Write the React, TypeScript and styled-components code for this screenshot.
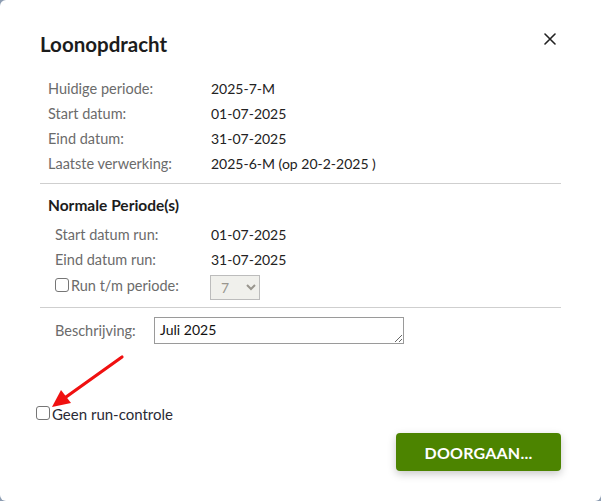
import React from 'react';
import styled, {createGlobalStyle} from 'styled-components';

const GlobalStyle = createGlobalStyle`
  html, body {
    margin: 0;
    padding: 0;
    background: #8d9db2;
  }
  body {
    font-family: "Source Sans Pro", Lato, "Liberation Sans", sans-serif;
  }
`;

interface InfoRow {
    label: string;
    value: string;
}

const huidig: InfoRow[] = [
    {label: 'Huidige periode:', value: '2025-7-M'},
    {label: 'Start datum:', value: '01-07-2025'},
    {label: 'Eind datum:', value: '31-07-2025'},
    {label: 'Laatste verwerking:', value: '2025-6-M (op 20-2-2025 )'},
];

const normaal: InfoRow[] = [
    {label: 'Start datum run:', value: '01-07-2025'},
    {label: 'Eind datum run:', value: '31-07-2025'},
];

const App = () => {
    return <>
        <GlobalStyle/>
        <Dialog>
            <Header>
                <Title>Loonopdracht</Title>
                <CloseButton aria-label="Sluiten">
                    <svg width="12" height="12" viewBox="0 0 12 12">
                        <path d="M1 1 L11 11 M11 1 L1 11" stroke="#222" strokeWidth="1.6" strokeLinecap="round"/>
                    </svg>
                </CloseButton>
            </Header>

            <InfoTable indent={8}>
                {huidig.map(r => <Row key={r.label}>
                    <Label width={163}>{r.label}</Label>
                    <Value>{r.value}</Value>
                </Row>)}
            </InfoTable>

            <Divider/>

            <Section>
                <SectionTitle>Normale Periode(s)</SectionTitle>
                <InfoTable indent={7}>
                    {normaal.map(r => <Row key={r.label}>
                        <Label width={156}>{r.label}</Label>
                        <Value>{r.value}</Value>
                    </Row>)}
                    <Row>
                        <Label width={155}>
                            <CheckLabel>
                                <Check type="checkbox"/>
                                Run t/m periode:
                            </CheckLabel>
                        </Label>
                        <Select disabled defaultValue="7">
                            <option value="7">7</option>
                        </Select>
                    </Row>
                </InfoTable>
            </Section>

            <Divider/>

            <DescRow>
                <Label width={99}>Beschrijving:</Label>
                <TextArea defaultValue="Juli 2025" rows={1}/>
            </DescRow>

            <Annotation>
                <Arrow width="90" height="60" viewBox="0 0 90 60">
                    <line x1="76" y1="3" x2="20" y2="43" stroke="#f01010" strokeWidth="3.2" strokeLinecap="round"/>
                    <polygon points="6,53 15,36 25,49" fill="#f01010"/>
                </Arrow>
                <CheckLabel dark>
                    <Check type="checkbox"/>
                    Geen run-controle
                </CheckLabel>
            </Annotation>

            <Footer>
                <PrimaryButton>DOORGAAN...</PrimaryButton>
            </Footer>
        </Dialog>
    </>;
};

const Dialog = styled.div`
  box-sizing: border-box;
  width: 601px;
  height: 501px;
  background: #fff;
  border-radius: 6px 0 6px 6px;
  padding: 28px 40px 0 40px;
  display: flex;
  flex-direction: column;
  color: #222;
  font-size: 14px;
  overflow: hidden;
`;

const Header = styled.div`
  display: flex;
  justify-content: space-between;
  align-items: flex-start;
  margin-bottom: 20px;
`;

const Title = styled.h2`
  margin: 4px 0 0 0;
  font-size: 20.5px;
  font-weight: 700;
  line-height: 24px;
  color: #1c1c1c;
`;

const CloseButton = styled.button`
  border: none;
  background: none;
  padding: 0;
  margin: 4px 4px 0 0;
  width: 14px;
  height: 14px;
  display: flex;
  align-items: center;
  justify-content: center;
  cursor: pointer;
`;

const InfoTable = styled.div<{indent: number}>`
  display: flex;
  flex-direction: column;
  padding-left: ${p => p.indent}px;
`;

const Row = styled.div`
  display: flex;
  align-items: center;
  min-height: 25px;
`;

const Label = styled.div<{width: number}>`
  width: ${p => p.width}px;
  flex-shrink: 0;
  color: #6b6b6b;
  line-height: 20px;
  font-size: 14.5px;
`;

const Value = styled.div`
  color: #222;
  line-height: 20px;
`;

const Divider = styled.hr`
  border: none;
  border-top: 1px solid #cfcfcf;
  margin: 7px 0 0 0;
  width: 100%;
`;

const Section = styled.div`
  display: flex;
  flex-direction: column;
  padding: 10px 0 0 8px;
`;

const SectionTitle = styled.div`
  font-weight: 700;
  font-size: 15.5px;
  color: #1c1c1c;
  line-height: 22px;
  margin-bottom: 6px;
`;

const CheckLabel = styled.label<{dark?: boolean}>`
  display: flex;
  align-items: flex-end;
  color: ${p => p.dark ? '#2a2a35' : '#6b6b6b'};
  line-height: 20px;
  font-size: ${p => p.dark ? 15 : 14.5}px;
  cursor: pointer;
`;

const Check = styled.input`
  appearance: none;
  width: 14px;
  height: 14px;
  margin: 0 2px 4px 0;
  border: 1px solid #767676;
  border-radius: 3px;
  background: #fff;
  box-sizing: border-box;
`;

const Select = styled.select`
  box-sizing: border-box;
  width: 50px;
  height: 25px;
  margin-top: 3px;
  border: 1px solid #a0a0a0;
  border-radius: 0;
  background: #ebebe4;
  color: #6e6a60;
  font-family: inherit;
  font-size: 14px;
  padding: 0 6px;
`;

const DescRow = styled.div`
  display: flex;
  align-items: center;
  padding: 9px 0 0 15px;
`;

const TextArea = styled.textarea`
  box-sizing: border-box;
  width: 250px;
  height: 27px;
  border: 1px solid #9a9a9a;
  border-radius: 0;
  padding: 3px 5px;
  font-family: inherit;
  font-size: 14px;
  color: #111;
  line-height: 18px;
  resize: both;
  overflow: hidden;
`;

const Annotation = styled.div`
  position: relative;
  margin: 60px 0 0 -4px;
`;

const Arrow = styled.svg`
  position: absolute;
  left: 10px;
  top: -50px;
`;

const Footer = styled.div`
  display: flex;
  justify-content: flex-end;
  margin-top: 9px;
`;

const PrimaryButton = styled.button`
  width: 165px;
  height: 38px;
  border: none;
  border-radius: 4px;
  background: #4c8400;
  color: #fff;
  font-family: inherit;
  font-size: 16px;
  font-weight: 700;
  letter-spacing: 0.2px;
  box-shadow: 0 3px 8px rgba(0, 0, 0, 0.22);
  cursor: pointer;
`;

export default App;
